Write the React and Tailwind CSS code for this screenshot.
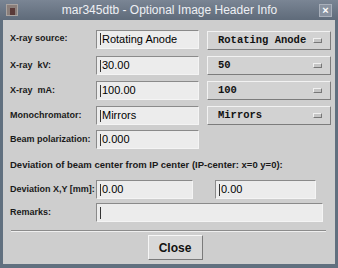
import React from "react";

const label = "text-[9px] font-bold text-[#1a1a1a] whitespace-pre";
const field =
  "h-[19px] bg-[#ececec] border border-t-[#8a8a8a] border-l-[#8a8a8a] border-b-[#f4f4f4] border-r-[#f4f4f4] flex items-center pl-[3px] text-[11px] text-black whitespace-nowrap";

const Field = ({ value, className = "" }) => (
  <div className={`${field} ${className}`}>
    <span className="w-px h-[12px] bg-[#333] mr-px" />
    <span className="leading-none">{value}</span>
  </div>
);

const Menu = ({ value }) => (
  <div className="w-[124px] h-[19px] bg-[#d2d2d2] border border-t-[#f2f2f2] border-l-[#f2f2f2] border-b-[#7c7c7c] border-r-[#7c7c7c] flex items-center justify-between pl-[10px] pr-[8px]">
    <span className="font-['Liberation_Mono',monospace] font-bold text-[10.5px] text-[#111] whitespace-nowrap">
      {value}
    </span>
    <span className="w-[9px] h-[5px] bg-[#c4c4c4] border border-t-[#f0f0f0] border-l-[#f0f0f0] border-b-[#777] border-r-[#777]" />
  </div>
);

const Row = ({ name, children, className = "" }) => (
  <div className={`flex items-center ${className}`}>
    <div className={`w-[87px] pl-[1px] ${label}`}>{name}</div>
    {children}
  </div>
);

export default function App() {
  return (
    <div className="w-[338px] h-[268px] bg-[#61707f] font-['Liberation_Sans',Arial,sans-serif] flex flex-col overflow-hidden">
      {/* title bar */}
      <div className="h-[20px] shrink-0 flex items-center px-[6px] bg-gradient-to-b from-[#7a8594] to-[#5f6b7a]">
        <div className="w-[12px] h-[12px] bg-[#8a7e7a] border border-[#a9a3a0] flex items-end justify-center">
          <span className="w-[5px] h-[7px] bg-[#5a3a38]" />
        </div>
        <div className="flex-1 text-center text-[12px] text-[#eef0f4] whitespace-nowrap pl-[2px]">
          mar345dtb - Optional Image Header Info
        </div>
        <div className="w-[13px] h-[13px] bg-[#8992a0] border border-[#a9b0bb] flex items-center justify-center text-[11px] leading-none text-white font-bold">
          ×
        </div>
      </div>
      {/* body */}
      <div className="flex-1 mx-[3px] mb-[4px] bg-[#cecece] pl-[6px] pr-[4px] pt-[8px] flex flex-col">
        <Row name="X-ray source:">
          <Field value="Rotating Anode" className="w-[103px]" />
          <div className="ml-[8px] mt-[3px]">
            <Menu value="Rotating Anode" />
          </div>
        </Row>
        <Row name="X-ray  kV:" className="mt-[6px]">
          <Field value="30.00" className="w-[103px]" />
          <div className="ml-[8px]">
            <Menu value="50" />
          </div>
        </Row>
        <Row name="X-ray  mA:" className="mt-[6px]">
          <Field value="100.00" className="w-[103px]" />
          <div className="ml-[8px]">
            <Menu value="100" />
          </div>
        </Row>
        <Row name="Monochromator:" className="mt-[6px]">
          <Field value="Mirrors" className="w-[103px]" />
          <div className="ml-[8px]">
            <Menu value="Mirrors" />
          </div>
        </Row>
        <Row name="Beam polarization:" className="mt-[5px]">
          <Field value="0.000" className="w-[103px]" />
        </Row>
        <div className="text-[9.5px] font-bold text-[#1a1a1a] whitespace-nowrap pl-[1px] mt-[9px] h-[14px] leading-[14px]">
          Deviation of beam center from IP center (IP-center: x=0 y=0):
        </div>
        <Row name="Deviation X,Y [mm]:" className="mt-[8px]">
          <Field value="0.00" className="w-[97px]" />
          <Field value="0.00" className="w-[101px] ml-[22px]" />
        </Row>
        <Row name="Remarks:" className="mt-[4px]">
          <Field value="" className="w-[227px]" />
        </Row>
        <div className="mt-[8px] h-[2px] border-t border-t-[#8c8c8c] border-b border-b-[#efefef] mr-[5px] ml-[2px]" />
        <div className="flex justify-center mt-[3px] pl-[10px]">
          <div className="w-[55px] h-[25px] bg-[#d8d8d8] border border-t-[#f6f6f6] border-l-[#f6f6f6] border-b-[#7a7a7a] border-r-[#7a7a7a] flex items-center justify-center text-[12px] font-bold text-[#111]">
            Close
          </div>
        </div>
      </div>
    </div>
  );
}
